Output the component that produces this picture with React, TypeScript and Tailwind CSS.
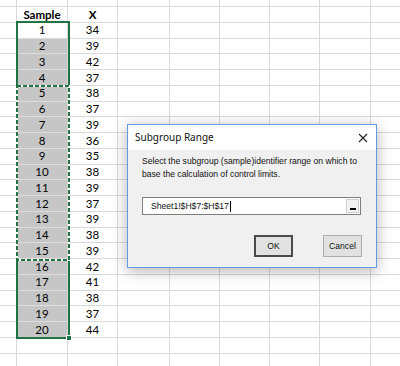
import React from "react";

const colWidths = ["w-[17px]", "w-[51px]", "w-[50px]", "w-[52px]", "w-[50px]", "w-[50px]", "w-[50px]", "w-[51px]", "w-[30px]"];
const xValues = [34, 39, 42, 37, 38, 37, 39, 36, 35, 38, 39, 37, 39, 38, 39, 42, 41, 38, 37, 44];

function Cell({ col, tall = true, gray = false, bold = false, children }: { col: number; tall?: boolean; gray?: boolean; bold?: boolean; children?: React.ReactNode }) {
  return (
    <div
      className={`${colWidths[col]} ${tall ? "h-[15.75px]" : "h-[7px]"} shrink-0 border-r border-b flex items-center justify-center leading-none ${
        gray ? "bg-[#c6c6c6] border-b-[#dedede] border-r-[#d4d4d4]" : "bg-white border-[#d9d9d9]"
      } ${bold ? "font-bold" : ""}`}
    >
      {children}
    </div>
  );
}

function Row({ tall = true, sample, x, gray = false, bold = false }: { tall?: boolean; sample?: React.ReactNode; x?: React.ReactNode; gray?: boolean; bold?: boolean }) {
  return (
    <div className="flex">
      <Cell col={0} tall={tall} />
      <Cell col={1} tall={tall} gray={gray} bold={bold}>{sample}</Cell>
      <Cell col={2} tall={tall} bold={bold}>{x}</Cell>
      {[3, 4, 5, 6, 7, 8].map((c) => (
        <Cell key={c} col={c} tall={tall} />
      ))}
    </div>
  );
}

function Dialog() {
  return (
    <div className="absolute left-[127px] top-[124px] w-[250px] h-[144px] border border-[#5f9be0] bg-[#f0f0f0] shadow-[0_3px_14px_rgba(0,0,0,0.3)] flex flex-col">
      <div className="h-[25px] bg-white flex items-center justify-between pl-[7px] pr-[7px] shrink-0">
        <span className="text-[10px] text-[#111] font-['Noto_Sans',sans-serif]">Subgroup Range</span>
        <svg width="10" height="10" viewBox="0 0 10 10" className="mr-[1px]">
          <path d="M1 1 L9 9 M9 1 L1 9" stroke="#222" strokeWidth="1.1" fill="none" />
        </svg>
      </div>
      <div className="flex flex-col px-[14px] pt-[5px] font-['Liberation_Sans',sans-serif] text-[8.6px] text-[#111]">
        <p className="leading-[12.5px] whitespace-nowrap">
          Select the subgroup (sample)identifier range on which to
          <br />
          base the calculation of control limits.
        </p>
        <div className="mt-[17px] h-[18px] w-[219px] bg-white border border-[#7f7f7f] flex items-center pl-[8px] pr-[1px]">
          <span className="text-[8.6px]">Sheet1!$H$7:$H$17</span>
          <span className="w-px h-[11px] bg-black ml-px" />
          <div className="ml-auto w-[13px] h-[14px] bg-[#f2f2f2] border border-[#d0d0d0] flex items-end justify-center pb-[2px]">
            <div className="w-[6px] h-[2px] bg-black" />
          </div>
        </div>
        <div className="mt-[20px] flex justify-end gap-[30px]">
          <button className="w-[39px] h-[22px] bg-[#e1e1e1] border-2 border-[#4a4a4a] text-[8.6px] flex items-center justify-center">OK</button>
          <button className="w-[39px] h-[22px] bg-[#e1e1e1] border border-[#adadad] text-[8.6px] flex items-center justify-center">Cancel</button>
        </div>
      </div>
    </div>
  );
}

export default function App() {
  return (
    <div className="relative w-[400px] h-[366px] overflow-hidden bg-white font-['Lato',sans-serif] text-[11.5px] text-black">
      <Row tall={false} />
      <Row sample="Sample" x="X" bold />
      {xValues.map((x, i) => (
        <Row key={i} sample={i + 1} x={x} gray={i > 0} />
      ))}
      <Row />
      <Row />

      {/* selection outline, copy marquee and fill handle */}
      <div className="absolute left-[16px] top-[21px] w-[54px] h-[318px] border-2 border-[#217346]" />
      <svg className="absolute left-[16px] top-[85px]" width="54" height="176" viewBox="0 0 54 176">
        <rect x="1" y="1" width="52" height="174" fill="none" stroke="#ffffff" strokeWidth="2" />
        <rect x="1" y="1" width="52" height="174" fill="none" stroke="#217346" strokeWidth="2" strokeDasharray="4 2" />
      </svg>
      <div className="absolute left-[66px] top-[335px] w-[6px] h-[6px] bg-[#217346] border border-white" />

      <Dialog />
    </div>
  );
}
